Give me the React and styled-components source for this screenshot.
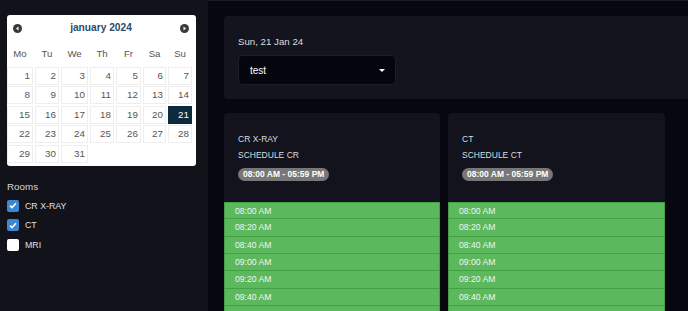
import React from 'react';
import styled, { createGlobalStyle } from 'styled-components';

const Global = createGlobalStyle`
  html, body {
    margin: 0;
    padding: 0;
    background: #07070f;
    font-family: "Liberation Sans", Arial, sans-serif;
  }
`

const Page = styled.div`
  display: flex;
  height: 100vh;
  overflow: hidden;
`

const Sidebar = styled.div`
  width: 208px;
  flex-shrink: 0;
  background: #12121b;
  padding: 15px 0 0 7px;
  box-sizing: border-box;
`

const Calendar = styled.div`
  width: 189px;
  height: 151px;
  background: #fff;
  border-radius: 3px;
  box-sizing: border-box;
`

const CalHeader = styled.div`
  height: 25px;
  display: flex;
  align-items: center;
  justify-content: space-between;
  padding: 0 7px 0 6px;
`

const Arrow = styled.span`
  width: 9px;
  height: 9px;
  border-radius: 50%;
  background: #3a3a3a;
  display: flex;
  align-items: center;
  justify-content: center;
  margin-top: 1px;
`

const Title = styled.div`
  font-weight: bold;
  font-size: 10.2px;
  color: #2d4b6b;
`

const Grid = styled.div`
  display: grid;
  grid-template-columns: 26px 24px 27px 24px 25px 23px 24px;
  column-gap: 2px;
  row-gap: 1.5px;
`

const DayName = styled.div`
  height: 24px;
  line-height: 27px;
  text-align: center;
  font-size: 9.6px;
  color: #555;
  margin-bottom: 1px;
`

const Cell = styled.div`
  height: 18px;
  box-sizing: border-box;
  border: 1px solid ${p => (p.$active ? '#0c2b3e' : '#eeeeee')};
  background: ${p => (p.$active ? '#0c2b3e' : '#fff')};
  color: ${p => (p.$active ? '#fff' : '#555')};
  font-size: 9.8px;
  text-align: right;
  padding-right: 2px;
  line-height: 16px;
  visibility: ${p => (p.$empty ? 'hidden' : 'visible')};
`

const RoomsLabel = styled.div`
  color: #d6d6d6;
  font-size: 9.8px;
  margin-top: 15px;
  margin-bottom: 4px;
`

const RoomRow = styled.label`
  display: flex;
  align-items: center;
  height: 19.5px;
  gap: 6px;
  color: #e0e0e0;
  font-size: 8.8px;
`

const Box = styled.span`
  width: 12px;
  height: 12px;
  border-radius: 2px;
  background: ${p => (p.$checked ? '#3b87d1' : '#fff')};
  display: flex;
  align-items: center;
  justify-content: center;
`

const Main = styled.div`
  flex: 1;
  border-top: 1px solid #1a1b25;
  padding: 15px 0 0 16px;
  min-width: 0;
`

const TopPanel = styled.div`
  height: 83px;
  background: #13141d;
  border-radius: 4px 0 0 4px;
  padding: 20px 14px 0;
  box-sizing: border-box;
`

const DateText = styled.div`
  color: #dedede;
  font-size: 9.7px;
  height: 12px;
  margin-bottom: 7px;
`

const Select = styled.div`
  width: 158px;
  height: 30px;
  box-sizing: border-box;
  background: #05050d;
  border: 1px solid #1d1e29;
  border-radius: 4px;
  display: flex;
  align-items: center;
  justify-content: space-between;
  padding: 0 10px 0 11px;
  color: #fff;
  font-size: 10px;
`

const Caret = styled.span`
  width: 0;
  height: 0;
  border-left: 3px solid transparent;
  border-right: 3px solid transparent;
  border-top: 3px solid #fff;
  margin-top: 1px;
`

const Columns = styled.div`
  display: flex;
  gap: 8px;
  margin-top: 14px;
`

const Card = styled.div`
  width: ${p => p.$w}px;
  flex-shrink: 0;
`

const CardHead = styled.div`
  background: #12131c;
  border-radius: 4px 4px 0 0;
  height: 89px;
  box-sizing: border-box;
  padding: 18px 14px 0;
  font-size: 8.5px;
`

const Line = styled.div`
  line-height: 16px;
  color: #dcdcdc;
`

const Badge = styled.span`
  display: inline-block;
  margin-top: 5px;
  height: 13px;
  line-height: 13px;
  padding: 0 5px;
  border-radius: 7px;
  background: #777;
  color: #fff;
  font-weight: bold;
  font-size: 8.5px;
`

const Slot = styled.div`
  height: 17.33px;
  box-sizing: border-box;
  background: #5cb85c;
  border: 1px solid #45a045;
  border-top: ${p => (p.$first ? '1px solid #45a045' : 'none')};
  padding-left: 10px;
  color: #f4f4f4;
  font-size: 8.6px;
  line-height: 16.5px;
  overflow: hidden;
`

const days = ['Mo', 'Tu', 'We', 'Th', 'Fr', 'Sa', 'Su']
const slots = ['08:00 AM', '08:20 AM', '08:40 AM', '09:00 AM', '09:20 AM', '09:40 AM', '10:00 AM']
const rooms = [
  { name: 'CR X-RAY', checked: true },
  { name: 'CT', checked: true },
  { name: 'MRI', checked: false },
]
const schedules = [
  { room: 'CR X-RAY', title: 'SCHEDULE CR', w: 216 },
  { room: 'CT', title: 'SCHEDULE CT', w: 217 },
]

const Check = () => (
  <svg width="8" height="7" viewBox="0 0 8 7">
    <path d="M1 3.6 L3 5.5 L7 1.3" stroke="#fff" strokeWidth="1.6" fill="none" />
  </svg>
)

const Tri = ({ dir }) => (
  <svg width="5" height="5" viewBox="0 0 5 5">
    <path d={dir === 'left' ? 'M3.5 0.5 L1 2.5 L3.5 4.5 Z' : 'M1.5 0.5 L4 2.5 L1.5 4.5 Z'} fill="#fff" />
  </svg>
)

function App() {
  const cells = []
  for (let i = 1; i <= 35; i++) cells.push(i <= 31 ? i : null)

  return (
    <Page>
      <Global />
      <Sidebar>
        <Calendar>
          <CalHeader>
            <Arrow><Tri dir="left" /></Arrow>
            <Title>january 2024</Title>
            <Arrow><Tri dir="right" /></Arrow>
          </CalHeader>
          <Grid>
            {days.map(d => <DayName key={d}>{d}</DayName>)}
            {cells.map((c, i) => (
              <Cell key={i} $empty={!c} $active={c === 21}>{c}</Cell>
            ))}
          </Grid>
        </Calendar>
        <RoomsLabel>Rooms</RoomsLabel>
        {rooms.map(r => (
          <RoomRow key={r.name}>
            <Box $checked={r.checked}>{r.checked && <Check />}</Box>
            {r.name}
          </RoomRow>
        ))}
      </Sidebar>
      <Main>
        <TopPanel>
          <DateText>Sun, 21 Jan 24</DateText>
          <Select>
            test
            <Caret />
          </Select>
        </TopPanel>
        <Columns>
          {schedules.map(s => (
            <Card key={s.room} $w={s.w}>
              <CardHead>
                <Line>{s.room}</Line>
                <Line>{s.title}</Line>
                <Badge>08:00 AM - 05:59 PM</Badge>
              </CardHead>
              {slots.map((t, i) => (
                <Slot key={t} $first={i === 0}>{t}</Slot>
              ))}
            </Card>
          ))}
        </Columns>
      </Main>
    </Page>
  );
}

export default App;
